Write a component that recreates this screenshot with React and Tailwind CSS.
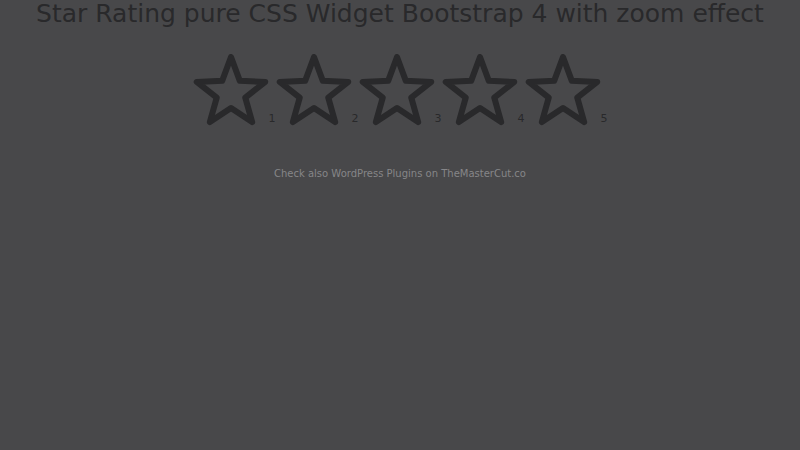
const ratings = [1, 2, 3, 4, 5];

// ten-point outline star centred on (cx, cy)
function starPoints(cx, cy, outer, inner) {
  const pts = [];
  for (let i = 0; i < 10; i++) {
    const r = i % 2 === 0 ? outer : inner;
    const a = (Math.PI / 5) * i - Math.PI / 2;
    pts.push(`${(cx + r * Math.cos(a)).toFixed(2)},${(cy + r * Math.sin(a)).toFixed(2)}`);
  }
  return pts.join(" ");
}

function Star() {
  return (
    <svg width="76" height="74" viewBox="0 0 76 74" className="block">
      <polygon
        points={starPoints(38, 39, 36, 15)}
        fill="none"
        stroke="#29292b"
        strokeWidth="6"
        strokeLinejoin="round"
      />
    </svg>
  );
}

export default function App() {
  return (
    <div className="w-[800px] h-[450px] bg-[#48484a] overflow-hidden font-['DejaVu_Sans',sans-serif] text-center">
      <h1 className="text-[25px] leading-[28px] text-[#29292b]">
        Star Rating pure CSS Widget Bootstrap 4 with zoom effect
      </h1>
      <div className="flex justify-center mt-[26px]">
        {ratings.map((n) => (
          <label key={n} className="flex items-end cursor-pointer">
            <Star />
            <span className="w-[7px] text-[11px] leading-[12px] text-[#29292b] mb-[3px] text-left">{n}</span>
          </label>
        ))}
      </div>
      <p className="mt-[38px] text-[10px] text-[#868688]">
        Check also WordPress Plugins on TheMasterCut.co
      </p>
    </div>
  );
}
